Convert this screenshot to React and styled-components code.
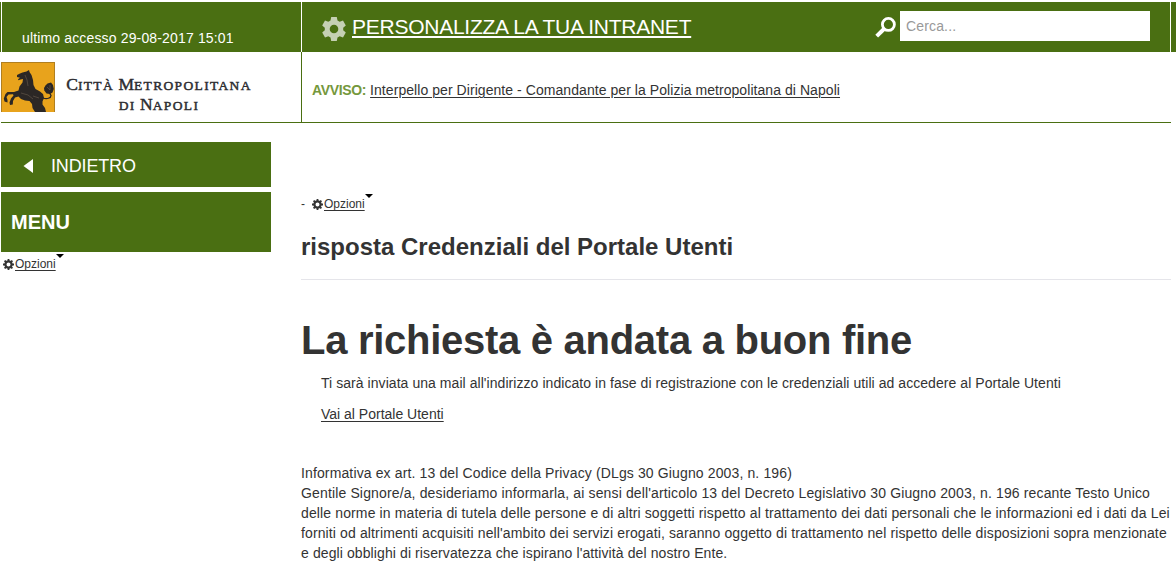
import React from "react";
import styled, { createGlobalStyle } from "styled-components";

const green = "#4a6f12";
const ink = "#333333";

const GlobalStyle = createGlobalStyle`
  * { box-sizing: border-box; }
  html, body { margin: 0; background: #fff; }
  body {
    font-family: "Liberation Sans", Arial, sans-serif;
    font-size: 14px;
    color: ${ink};
    overflow: hidden;
  }
  h1, h2, p { margin: 0; }
  svg { display: block; flex: none; }
`;

const Page = styled.div`
  width: 1176px;
  height: 574px;
  padding-top: 2px;
  overflow: hidden;
`;

const TopBar = styled.header`
  display: flex;
  height: 50px;
  background: ${green};
  padding-left: 1px;
`;

const AccessCell = styled.div`
  width: 300px;
  border-left: 1px solid #fff;
  padding: 27px 0 0 20px;
  color: #fff;
  font-size: 14px;
  line-height: 18px;
  letter-spacing: 0.15px;
  white-space: nowrap;
`;

const ToolsCell = styled.div`
  width: 870px;
  display: flex;
  align-items: flex-start;
  border-left: 1px solid #fff;
  border-right: 1px solid #fff;
  padding: 0 20px;
`;

const Customize = styled.a`
  display: flex;
  gap: 6px;
  color: #fff;
  padding-top: 15px;
`;

const CustomizeLabel = styled.span`
  font-size: 21px;
  line-height: 20px;
  text-decoration: underline;
  text-decoration-thickness: 2px;
  text-underline-offset: 2px;
  letter-spacing: -0.25px;
  white-space: nowrap;
`;

const Search = styled.label`
  display: flex;
  gap: 3px;
  margin-left: auto;
  padding-top: 9px;
`;

const SearchIconBox = styled.span`
  padding-top: 5px;
`;

const SearchInput = styled.input`
  width: 250px;
  height: 30px;
  border: 0;
  padding: 0 6px;
  font: 14px "Liberation Sans", Arial, sans-serif;
  letter-spacing: 0.15px;
  background: #fff;
  &::placeholder { color: #999; opacity: 1; }
`;

const Banner = styled.div`
  display: flex;
  width: 1170px;
  height: 71px;
  margin-left: 1px;
  border-bottom: 1px solid ${green};
`;

const Brand = styled.div`
  width: 300px;
  display: flex;
  gap: 10px;
  padding-top: 10px;
`;

const BrandName = styled.div`
  width: 188px;
  padding-top: 13px;
  font-family: "Liberation Serif", "Times New Roman", serif;
  font-size: 17.5px;
  line-height: 19px;
  color: #2c2c30;
  text-align: center;
  white-space: nowrap;
  -webkit-text-stroke: 0.45px #2c2c30;
`;

const Small = styled.span`
  font-size: 13.5px;
  letter-spacing: 1.35px;
`;

const Notice = styled.div`
  flex: 1;
  border-left: 1px solid ${green};
  padding: 28px 0 0 10px;
  line-height: 20px;
  white-space: nowrap;
`;

const NoticeTag = styled.strong`
  color: #75983c;
  letter-spacing: -0.35px;
  margin-right: 4px;
`;

const Link = styled.a`
  color: ${ink};
  text-decoration: underline;
  text-underline-offset: 2px;
  text-decoration-thickness: 1px;
  letter-spacing: ${(p) => p.$track || "0"};
`;

const Body = styled.div`
  display: flex;
  gap: 30px;
  padding: 19px 5px 0 1px;
`;

const Sidebar = styled.nav`
  width: 270px;
`;

const BackButton = styled.div`
  display: flex;
  align-items: center;
  gap: 18px;
  height: 45px;
  padding: 3px 0 0 22px;
  margin-bottom: 5px;
  background: ${green};
  color: #fff;
  font-size: 18px;
  letter-spacing: -0.15px;
`;

const MenuHeading = styled.div`
  height: 60px;
  padding-left: 10px;
  line-height: 60px;
  background: ${green};
  color: #fff;
  font-size: 20px;
  font-weight: bold;
`;

const OptionsRow = styled.div`
  display: flex;
  height: 20px;
  font-size: 12px;
  line-height: 20px;
  padding-left: ${(p) => p.$indent || "0"};
  padding-top: 2px;
`;

const OptionIcon = styled.span`
  padding: 5px 1px 0 0;
`;

const Dash = styled.span`
  width: 11px;
`;

const Caret = styled.span`
  width: 7px;
  height: 4px;
  border: 4px solid transparent;
  border-top-color: #000;
  border-bottom: 0;
`;

const Content = styled.main`
  width: 870px;
  padding-top: 50px;
  white-space: nowrap;
`;

const Title = styled.h2`
  height: 68px;
  border-bottom: 1px solid #e5e5ea;
  font-size: 24px;
  line-height: 69px;
`;

const Headline = styled.h1`
  margin-top: 39px;
  margin-bottom: 1px;
  font-size: 40px;
  line-height: 42px;
  letter-spacing: -0.28px;
`;

const Message = styled.div`
  padding: 11px 0 0 20px;
  line-height: 20px;
  letter-spacing: 0.055px;
`;

const Gap = styled.p`
  margin-top: 11px;
`;

const Privacy = styled.div`
  margin-top: 39px;
  font-size: 14px;
  line-height: 20px;
`;

const PrivacyLine = styled.p`
  letter-spacing: ${(p) => p.$track};
`;

function Gear({ size, color }) {
  return (
    <svg width={size} height={size} viewBox="0 0 24 24" fill={color}>
      <path
        fillRule="evenodd"
        d="M9.2 0h5.6l.7 3.4 2.2 1.3L21 3.6l2.8 4.8-2.6 2.3v2.6l2.6 2.3-2.8 4.8-3.3-1.1-2.2 1.3-.7 3.4H9.2l-.7-3.4-2.2-1.3L3 20.4.2 15.6l2.6-2.3v-2.6L.2 8.4 3 3.6l3.3 1.1 2.2-1.3zM12 7.7a4.3 4.3 0 1 0 0 8.6 4.3 4.3 0 0 0 0-8.6z"
      />
    </svg>
  );
}

function Cog() {
  return (
    <svg width="11" height="11" viewBox="0 0 11 11">
      <circle cx="5.5" cy="5.500" r="3.1" fill="none" stroke={ink} strokeWidth="2.2" />
      <path
        d="M5.5 0v2M5.5 9v2M0 5.5h2M9 5.5h2M1.6 1.6 3 3M8 8l1.4 1.4M9.4 1.6 8 3M3 8 1.6 9.4"
        stroke={ink}
        strokeWidth="1.8"
      />
    </svg>
  );
}

function Magnifier() {
  return (
    <svg width="22" height="22" viewBox="0 0 22 22" fill="none" stroke="#fff">
      <circle cx="13.4" cy="8.4" r="6" strokeWidth="2.8" />
      <path d="M9 13 1.7 20.2" strokeWidth="4" />
    </svg>
  );
}

function HorseLogo() {
  return (
    <svg width="54" height="50" viewBox="0 0 54 50">
      <rect x=".5" y=".5" width="53" height="52" fill="#e8a31c" stroke="#b07f20" />
      <g fill="#2b2725">
        <path d="M16 13 19 11.500 21.500 10.500 25.500 9.500 28 8 28.500 10 30.500 13 32 18 32.500 23 34.500 27 39 29.500 42 32 43 36 41.500 39.500 41.500 42.500 44 46 45 50H34L31.500 46 31 42 28.500 39 24 38.500 20 37 17.500 34.500 14 35.500 12 39 11.800 42.500 9 43 8.500 40.500 10 36.500 12.500 33.500 12 32.300 7.500 32.500 5.500 35 6.500 38 6.500 40.500 3.500 39.500 2.800 36.500 4.500 32 6.500 30 13 30 17.500 28.500 18.500 24.500 21.500 20.500 22 17 19.500 17.500 17.500 18.200 17 17.200 19 15.800 16 15Z" />
        <path d="M45.500 31.500 43.300 28.500 43 26 44.500 23.500 46.500 21.500 50 20.500 52 23 52.800 27 51.500 30.500 49 32Z" />
      </g>
      <path d="M42 36C46 37.500 50 36 50 33.500L48.500 31" fill="none" stroke="#2b2725" strokeWidth="1.3" />
      <path d="M24 13l2 5 1 6M20 31l7 2 5 4M32 34l6 2M46 25l3 3M49 23v5" fill="none" stroke="#625548" strokeWidth=".7" />
    </svg>
  );
}

function Options({ indent, lead }) {
  return (
    <OptionsRow $indent={indent}>
      {lead && <Dash>{lead}</Dash>}
      <OptionIcon><Cog /></OptionIcon>
      <Link>Opzioni</Link>
      <Caret />
    </OptionsRow>
  );
}

const privacy = [
  ["Informativa ex art. 13 del Codice della Privacy (DLgs 30 Giugno 2003, n. 196)", "0.13px"],
  ["Gentile Signore/a, desideriamo informarla, ai sensi dell'articolo 13 del Decreto Legislativo 30 Giugno 2003, n. 196 recante Testo Unico", "0.143px"],
  ["delle norme in materia di tutela delle persone e di altri soggetti rispetto al trattamento dei dati personali che le informazioni ed i dati da Lei", "0.13px"],
  ["forniti od altrimenti acquisiti nell'ambito dei servizi erogati, saranno oggetto di trattamento nel rispetto delle disposizioni sopra menzionate", "0.125px"],
  ["e degli obblighi di riservatezza che ispirano l'attività del nostro Ente.", "0.1px"],
];

export default function App() {
  return (
    <Page>
      <GlobalStyle />
      <TopBar>
        <AccessCell>ultimo accesso 29-08-2017 15:01</AccessCell>
        <ToolsCell>
          <Customize>
            <Gear size={24} color="#c5d0b3" />
            <CustomizeLabel>PERSONALIZZA LA TUA INTRANET</CustomizeLabel>
          </Customize>
          <Search>
            <SearchIconBox><Magnifier /></SearchIconBox>
            <SearchInput placeholder="Cerca..." />
          </Search>
        </ToolsCell>
      </TopBar>
      <Banner>
        <Brand>
          <HorseLogo />
          <BrandName>
            C<Small>ITTÀ</Small> M<Small>ETROPOLITANA</Small>
            <br />
            <Small>DI</Small> N<Small>APOLI</Small>
          </BrandName>
        </Brand>
        <Notice>
          <NoticeTag>AVVISO:</NoticeTag>
          <Link $track="0.06px">Interpello per Dirigente - Comandante per la Polizia metropolitana di Napoli</Link>
        </Notice>
      </Banner>
      <Body>
        <Sidebar>
          <BackButton>
            <svg width="10" height="14" viewBox="0 0 10 14"><path d="M10 0v14L.5 7z" fill="#fff" /></svg>
            INDIETRO
          </BackButton>
          <MenuHeading>MENU</MenuHeading>
          <Options indent="2px" />
        </Sidebar>
        <Content>
          <Options lead="-" />
          <Title>risposta Credenziali del Portale Utenti</Title>
          <Headline>La richiesta è andata a buon fine</Headline>
          <Message>
            <p>Ti sarà inviata una mail all'indirizzo indicato in fase di registrazione con le credenziali utili ad accedere al Portale Utenti</p>
            <Gap><Link>Vai al Portale Utenti</Link></Gap>
          </Message>
          <Privacy>
            {privacy.map(([text, track]) => (
              <PrivacyLine key={text} $track={track}>{text}</PrivacyLine>
            ))}
          </Privacy>
        </Content>
      </Body>
    </Page>
  );
}
